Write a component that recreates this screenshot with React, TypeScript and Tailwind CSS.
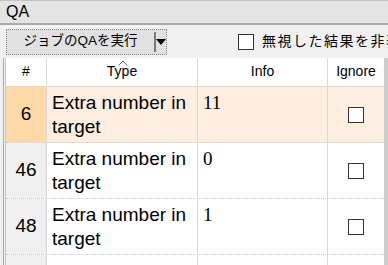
import React from 'react';

const rows = [
  { id: 6, type: 'Extra number in target', info: '11', selected: true },
  { id: 46, type: 'Extra number in target', info: '0', selected: false },
  { id: 48, type: 'Extra number in target', info: '1', selected: false },
  { id: 0, type: '', info: '', selected: false },
];

const Box = ({ className = '' }: { className?: string }) => (
  <span className={`inline-block w-[16px] h-[16px] border border-[#333333] bg-white ${className}`} />
);

export default function App() {
  return (
    <div
      className="w-[388px] h-[265px] overflow-hidden bg-[#f0f0f0] flex flex-col text-black"
      style={{ fontFamily: '"Liberation Sans", "Noto Sans CJK JP", sans-serif' }}
    >
      <div className="h-[25px] shrink-0 border-t border-[#c4c4c4] border-b-2 border-b-[#a9a9a9] bg-[#e4e4e4] flex items-center px-[6px] text-[16px] leading-none">
        QA
      </div>

      <div className="h-[33px] shrink-0 flex items-center pl-[6px]">
        <div className="w-[165px] h-[26px] flex border border-dotted border-[#888888] bg-[#e1e1e1]">
          <span className="w-[149px] flex items-center justify-center text-[13.5px] border-r-2 border-[#7a7a7a] my-[2px]">
            ジョブのQAを実行
          </span>
          <span className="flex-1 flex items-center justify-center">
            <svg width="10" height="6" viewBox="0 0 10 6">
              <path d="M0 0h10L5 6z" fill="#000" />
            </svg>
          </span>
        </div>
        <div className="ml-[71px] flex items-center gap-[8px] whitespace-nowrap">
          <Box className="w-[15px] h-[15px]" />
          <span className="text-[14px] tracking-[1.5px]">無視した結果を非表示</span>
        </div>
      </div>

      <div className="flex-1 flex ml-[3px] border-l border-[#a8a8a8] pl-[1px] min-h-0">
        <div className="flex-1 flex flex-col border-l border-[#c8c8c8] bg-white min-h-0">
          <div className="grid grid-cols-[41px_151px_130px_56px] h-[29px] shrink-0 border-b border-[#d8d8d8] text-[14px]">
            <div className="border-r border-[#d8d8d8] flex items-end justify-center pb-[4px]">#</div>
            <div className="border-r border-[#d8d8d8] relative flex items-end justify-center pb-[4px]">
              <svg className="absolute top-[2px] left-[71px]" width="10" height="6" viewBox="0 0 10 6">
                <path d="M0.5 5.5L5 1l4.5 4.5" fill="none" stroke="#666" strokeWidth="1" />
              </svg>
              Type
            </div>
            <div className="border-r border-[#d8d8d8] flex items-end justify-center pb-[4px]">Info</div>
            <div className="flex items-end justify-center pb-[4px]">Ignore</div>
          </div>
          {rows.map((r, i) => (
            <div
              key={i}
              className={`grid grid-cols-[41px_151px_130px_56px] h-[56px] shrink-0 border-b border-dotted border-[#c8c8c8] ${
                r.selected ? 'bg-[#fdeedf]' : 'bg-white'
              }`}
            >
              <div
                className={`border-r border-[#d8d8d8] flex items-center justify-center text-[19px] ${
                  r.selected ? 'bg-[#ffd9a7]' : 'bg-[#f0f0f0]'
                }`}
              >
                {r.id ? r.id : ''}
              </div>
              <div className="border-r border-[#d8d8d8] pl-[5px] pt-[4px] pr-[4px] text-[19px] leading-[24px]">
                {r.type}
              </div>
              <div
                className="border-r border-[#d8d8d8] pl-[5px] pt-[4px] text-[19px] leading-[24px]"
                style={{ fontFamily: '"Liberation Serif", serif' }}
              >
                {r.info}
              </div>
              <div className="flex items-center justify-center">{r.id ? <Box /> : null}</div>
            </div>
          ))}
        </div>
        <div className="w-[5px] shrink-0 bg-[#cdcdcd]" />
      </div>
    </div>
  );
}
